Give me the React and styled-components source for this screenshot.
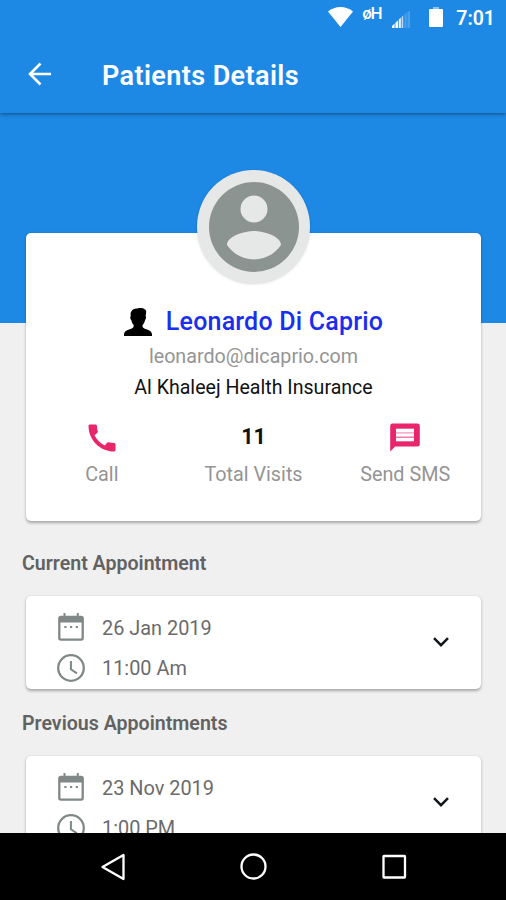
import React from 'react';
import styled, { createGlobalStyle } from 'styled-components';
import { MdCall } from 'react-icons/md';

const appointments = {
  current: { date: '26 Jan 2019', time: '11:00 Am' },
  previous: { date: '23 Nov 2019', time: '1:00 PM' },
};

const StatusIcons = () => (
  <>
    <WifiIcon viewBox="0 0 25 20">
      <path d="M0 4.5C7-1.5 18-1.5 25 4.5L12.5 20z" fill="#fff" />
    </WifiIcon>
    <NetworkType>øH</NetworkType>
    <SignalIcon viewBox="0 0 18 17">
      <path d="M0 17v-2l2.6-2.4V17zM3.4 17v-5.2L6 9.4V17zM6.8 17V8.6l2-1.9V17z" fill="#fff" />
      <path d="M9.6 17V6l1.6-1.6V17z" fill="#b9dcf8" />
      <path d="M12.4 17V3.4l2.2-2.1V17zM15.4 17V1L18 0v17z" fill="#4a9fea" />
    </SignalIcon>
    <BatteryIcon viewBox="0 0 14 20">
      <path d="M4 0h6v2H4z" fill="#8ec5f4" />
      <path d="M1 2h12a1 1 0 0 1 1 1v16a1 1 0 0 1-1 1H1a1 1 0 0 1-1-1V3a1 1 0 0 1 1-1z" fill="#fff" />
    </BatteryIcon>
  </>
);

const Appointment = (props) => {
  return (
    <AppointmentCard>
      <div>
        <Line>
          <CalendarIcon viewBox="0 0 26 28">
            <path d="M2 3.5h22V9.5H2z" fill="#7f8886" />
            <path d="M6.5 0v5M19.8 0v5" stroke="#7f8886" strokeWidth="2" />
            <rect x="1.3" y="4" width="23.4" height="22.6" rx="1.6" fill="none" stroke="#7f8886" strokeWidth="2.3" />
            <path d="M6.3 14h2.2M12 14h2.2M17.7 14h2.2" stroke="#7f8886" strokeWidth="2.2" />
          </CalendarIcon>
          <span>{props.date}</span>
        </Line>
        <Line>
          <ClockIcon viewBox="0 0 28 28">
            <circle cx="14" cy="14" r="12.8" fill="none" stroke="#7f8886" strokeWidth="2.3" />
            <path d="M13.9 7v8.2l6 4.2" fill="none" stroke="#7f8886" strokeWidth="2" />
          </ClockIcon>
          <span>{props.time}</span>
        </Line>
      </div>
      <ChevronIcon viewBox="0 0 16 10">
        <path d="M1 1.2l7 7 7-7" fill="none" stroke="#10181c" strokeWidth="2.5" />
      </ChevronIcon>
    </AppointmentCard>
  );
};

const App = () => {
  return (
    <Screen>
      <GlobalStyle />
      <Header>
        <StatusBar>
          <StatusIcons />
          <Clock>7:01</Clock>
        </StatusBar>
        <Toolbar>
          <BackIcon viewBox="0 0 24 24">
            <path d="M23 12H2M12.5 1.5L2 12l10.5 10.5" fill="none" stroke="#fff" strokeWidth="2.6" />
          </BackIcon>
          <Title>Patients Details</Title>
        </Toolbar>
      </Header>
      <Content>
        <ProfileCard>
          <Avatar>
            <svg viewBox="2 2 20 20">
              <path
                fill="#8c9491"
                d="M12 2a10 10 0 1 0 0 20 10 10 0 0 0 0-20zm0 3a3 3 0 1 1 0 6 3 3 0 0 1 0-6zm0 14.2c-2.5 0-4.71-1.28-6-3.22.03-1.99 4-3.08 6-3.08 1.99 0 5.97 1.09 6 3.08-1.29 1.94-3.5 3.22-6 3.22z"
              />
            </svg>
          </Avatar>
          <NameRow>
            <PersonIcon viewBox="0 0 28 28">
              <path d="M7.5 3.2C8.5 1 11 .2 13.5.5c2.4-.8 5.8-.4 7.4.9 1.3.3 1.5 2 1.1 4.1l-.4 2.6c.8.3.6 2.6-.6 4.2-.4 2-1.1 3.4-2.4 4.7-.5 2.2.5 3.1 3.1 4 3.8 1.2 6.1 2.2 6.3 5.8V28H0v-1.2c.3-3.5 2.5-4.6 6.4-5.8 2.5-.8 3.7-1.8 3.3-4-1.2-1.2-2-2.7-2.3-4.7-1.4-1.4-1.4-3.8-.6-4.2-.4-2.2-.4-3.6.7-4.9z" />
            </PersonIcon>
            <Name>Leonardo Di Caprio</Name>
          </NameRow>
          <Email>leonardo@dicaprio.com</Email>
          <Insurance>Al Khaleej Health Insurance</Insurance>
          <Stats>
            <Stat>
              <MdCall />
              <span>Call</span>
            </Stat>
            <Stat>
              <b>11</b>
              <span>Total Visits</span>
            </Stat>
            <Stat>
              <svg viewBox="0 0 36 36">
                <path d="M5.5 3.5h25a2.3 2.3 0 0 1 2.3 2.3v18.4a2.3 2.3 0 0 1-2.3 2.3H8.2L3.2 31.5V5.8a2.3 2.3 0 0 1 2.3-2.3z" fill="#e9266b" />
                <path d="M9 8.7h18v12.6H9z" fill="#fff" />
                <path d="M9 12.9h18" stroke="#f49abb" strokeWidth="1.3" />
                <path d="M9 17.2h18" stroke="#ee6595" strokeWidth="1.3" />
              </svg>
              <span>Send SMS</span>
            </Stat>
          </Stats>
        </ProfileCard>
        <SectionTitle $top="31px">Current Appointment</SectionTitle>
        <Appointment {...appointments.current} />
        <SectionTitle $top="23px">Previous Appointments</SectionTitle>
        <Appointment {...appointments.previous} />
      </Content>
      <NavBar>
        <NavIcon viewBox="0 0 28 28">
          <path d="M24.5 2v24L3.5 14z" />
        </NavIcon>
        <NavIcon viewBox="0 0 28 28">
          <circle cx="13.5" cy="13.5" r="12" />
        </NavIcon>
        <NavIcon viewBox="0 0 28 28">
          <rect x="3.5" y="3" width="21.5" height="21.5" rx="0.5" />
        </NavIcon>
      </NavBar>
    </Screen>
  );
};

export default App;

const GlobalStyle = createGlobalStyle`
  * {
    box-sizing: border-box;
  }

  body {
    margin: 0;
    font-family: Roboto, sans-serif;
  }

  svg {
    display: block;
    flex-shrink: 0;
  }
`;

const Screen = styled.div`
  display: flex;
  flex-direction: column;
  width: 506px;
  height: 900px;
  overflow: hidden;
  background: #f0f0f0;
`;

const Header = styled.header`
  flex-shrink: 0;
  height: 113px;
  background: #1e88e5;
  color: #fff;
  box-shadow: 0 1px 4px rgba(0, 0, 0, 0.45);
  z-index: 1;
`;

const StatusBar = styled.div`
  display: flex;
  align-items: flex-start;
  justify-content: flex-end;
  height: 36px;
  padding: 7px 11px 0 0;
`;

const WifiIcon = styled.svg`
  width: 25px;
  height: 20px;
`;

const NetworkType = styled.span`
  width: 19px;
  margin: -3px 11px 0 9px;
  font-size: 17px;
  font-weight: 500;
  line-height: 19px;
  letter-spacing: -1.5px;
`;

const SignalIcon = styled.svg`
  width: 18px;
  height: 17px;
  margin: 4px 19px 0 0;
`;

const BatteryIcon = styled.svg`
  width: 14px;
  height: 20px;
  margin-right: 13px;
`;

const Clock = styled.span`
  font-size: 19.5px;
  font-weight: 600;
  line-height: 24px;
`;

const Toolbar = styled.div`
  display: flex;
  align-items: center;
  height: 77px;
  padding-left: 28px;
`;

const BackIcon = styled.svg`
  width: 24px;
  height: 24px;
  margin-top: -2px;
`;

const Title = styled.h1`
  margin: 2px 0 0 50px;
  font-size: 27px;
  font-weight: 600;
  line-height: 32px;
  letter-spacing: 0.4px;
`;

const Content = styled.main`
  flex: 1;
  min-height: 0;
  overflow: hidden;
  padding: 120px 25px 0 26px;
  background: linear-gradient(#1e88e5 210.5px, #f0f0f0 210.5px);
`;

const Card = styled.section`
  background: #fff;
  border-radius: 5px;
  box-shadow: 0 1.5px 3px rgba(0, 0, 0, 0.3);
`;

const ProfileCard = styled(Card)`
  display: flex;
  flex-direction: column;
  align-items: center;
  height: 288px;
`;

const Avatar = styled.div`
  flex-shrink: 0;
  width: 113px;
  height: 113px;
  margin-top: -63px;
  padding: 11.5px;
  border-radius: 50%;
  background: #e6e7e7;
  box-shadow: 0 1px 3px rgba(0, 0, 0, 0.15);
`;

const NameRow = styled.div`
  display: flex;
  align-items: center;
  margin-top: 24px;
`;

const PersonIcon = styled.svg`
  width: 28px;
  height: 28px;
  margin-right: 14px;
`;

const Name = styled.h2`
  margin: 0;
  color: #1a2fee;
  font-size: 25px;
  font-weight: 500;
  line-height: 30px;
  letter-spacing: 0.2px;
`;

const Email = styled.div`
  color: #949494;
  font-size: 19.7px;
  line-height: 24px;
  margin-top: 8px;
`;

const Insurance = styled.div`
  color: #111;
  font-size: 19.6px;
  line-height: 24px;
  margin-top: 7px;
`;

const Stats = styled.div`
  display: grid;
  grid-template-columns: repeat(3, 1fr);
  width: 100%;
  margin-top: 20px;
`;

const Stat = styled.div`
  display: flex;
  flex-direction: column;
  align-items: center;

  svg {
    width: 36px;
    height: 36px;
    color: #e9266b;
  }

  b {
    height: 36px;
    color: #111;
    font-size: 21.5px;
    font-weight: 700;
    line-height: 34px;
  }

  span {
    margin-top: 7px;
    color: #949494;
    font-size: 19.8px;
    line-height: 24px;
  }
`;

const SectionTitle = styled.h3`
  margin: ${(props) => props.$top} 0 20px -4px;
  color: #626262;
  font-size: 19.6px;
  font-weight: 600;
  line-height: 24px;
`;

const AppointmentCard = styled(Card)`
  display: flex;
  align-items: flex-start;
  justify-content: space-between;
  height: 93px;
  padding: 11px 32px 0 31px;
`;

const Line = styled.div`
  display: flex;
  align-items: center;
  height: 40.5px;
  color: #6b6b6b;
  font-size: 19.9px;
  line-height: 38px;

  span {
    margin-left: 17px;
    padding-top: 3px;
  }
`;

const CalendarIcon = styled.svg`
  width: 26px;
  height: 28px;
  margin: 0 1px;
`;

const ClockIcon = styled.svg`
  width: 28px;
  height: 28px;
`;

const ChevronIcon = styled.svg`
  width: 16px;
  height: 10px;
  margin-top: 30px;
`;

const NavBar = styled.nav`
  display: flex;
  align-items: center;
  justify-content: space-between;
  flex-shrink: 0;
  height: 67px;
  padding: 0 98px 0 99px;
  background: #000;
  z-index: 1;
`;

const NavIcon = styled.svg`
  width: 28px;
  height: 28px;
  fill: none;
  stroke: #fff;
  stroke-width: 2.3;
  stroke-linejoin: round;
`;
